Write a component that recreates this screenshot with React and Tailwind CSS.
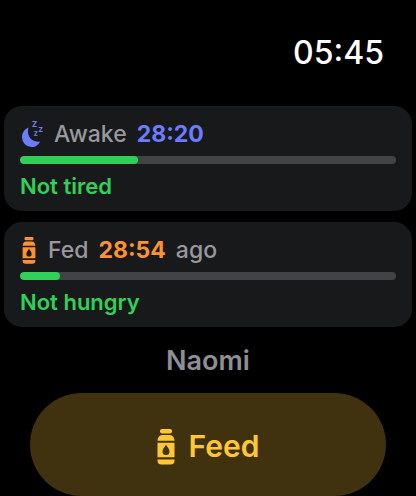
import React from 'react';

const SleepIcon = ({ className }) => (
  <svg className={className} viewBox="0 0 24 27" fill="currentColor" aria-hidden="true">
    <path d="M8.6 6.6C4.6 8 2 12 2 16.4a9.6 9.6 0 0 0 9.6 9.6c3.8 0 7-2.2 8.4-5.6C12.5 22.2 5.8 15.2 8.6 6.6Z" />
    <g fontFamily="Inter, sans-serif" fontWeight="800">
      <text x="12" y="6" fontSize="7.5">Z</text>
      <text x="18.4" y="10.5" fontSize="6.5">Z</text>
      <text x="13.8" y="15" fontSize="6">Z</text>
    </g>
  </svg>
);

const BottleIcon = ({ className }) => (
  <svg className={className} viewBox="0 0 18 36" fill="currentColor" aria-hidden="true">
    <rect x="3" y="0" width="12" height="4.4" rx="1.8" />
    <path d="M5 6h8c2.5 0 4.5 2.8 4.5 5.8H.5C.5 8.8 2.5 6 5 6Z" />
    <path
      fillRule="evenodd"
      d="M.5 13.8h17v14.4H.5ZM9 15.8c-1.3 2.3-3.5 4.3-3.5 6.8a3.5 3.5 0 0 0 7 0c0-2.5-2.2-4.5-3.5-6.8Z"
    />
    <path d="M.5 30.5h17v1a4 4 0 0 1-4 4h-9a4 4 0 0 1-4-4Z" />
  </svg>
);

const StatusCard = ({ icon, label, time, timeClass, suffix, progress, status }) => (
  <section className="rounded-[18px] bg-[#18191b] px-4 pt-3 pb-[11px]">
    <div className="flex h-8 items-center text-[23px]">
      {icon}
      <span className="font-medium text-[#98989f]">{label}</span>
      <span className={`ml-2.5 font-bold ${timeClass}`}>{time}</span>
      {suffix && <span className="ml-2.5 font-medium text-[#98989f]">{suffix}</span>}
    </div>
    <div
      className="mt-1.5 h-2 overflow-hidden rounded-full bg-[#424347]"
      role="progressbar"
      aria-label={label}
      aria-valuenow={progress}
      aria-valuemin={0}
      aria-valuemax={100}
    >
      <div className="h-full rounded-full bg-[#30d158]" style={{ width: `${progress}%` }} />
    </div>
    <p className="mt-2 text-[22px] leading-7 font-semibold text-[#30d158]">{status}</p>
  </section>
);

export default function App() {
  return (
    <div className="flex min-h-screen flex-col bg-black font-['Inter',sans-serif]">
      <header className="flex h-[106px] items-center justify-end px-8">
        <time className="text-[32px] leading-10 font-medium text-white">05:45</time>
      </header>

      <main className="flex flex-1 flex-col">
        <div className="flex flex-col gap-[11px] px-1">
          <StatusCard
            icon={<SleepIcon className="mr-2.5 h-[27px] w-6 overflow-visible text-[#6d7cff]" />}
            label="Awake"
            time="28:20"
            timeClass="text-[#6d7cff]"
            progress={31.4}
            status="Not tired"
          />
          <StatusCard
            icon={<BottleIcon className="mr-3 ml-0.5 h-[27px] w-3.5 text-[#ff9230]" />}
            label="Fed"
            time="28:54"
            timeClass="text-[#ff9230]"
            suffix="ago"
            progress={10.6}
            status="Not hungry"
          />
        </div>

        <h1 className="pt-4 pb-3.5 text-center text-[27px] leading-9 font-semibold text-[#8e8e95]">Naomi</h1>

        <button
          type="button"
          className="mx-[30px] flex min-h-24 flex-1 items-center justify-center gap-3.5 rounded-full bg-[#40310f] pt-1 text-[30px] font-semibold text-[#ffc832]"
        >
          <BottleIcon className="h-9 w-[18px]" />
          Feed
        </button>
      </main>
    </div>
  );
}
